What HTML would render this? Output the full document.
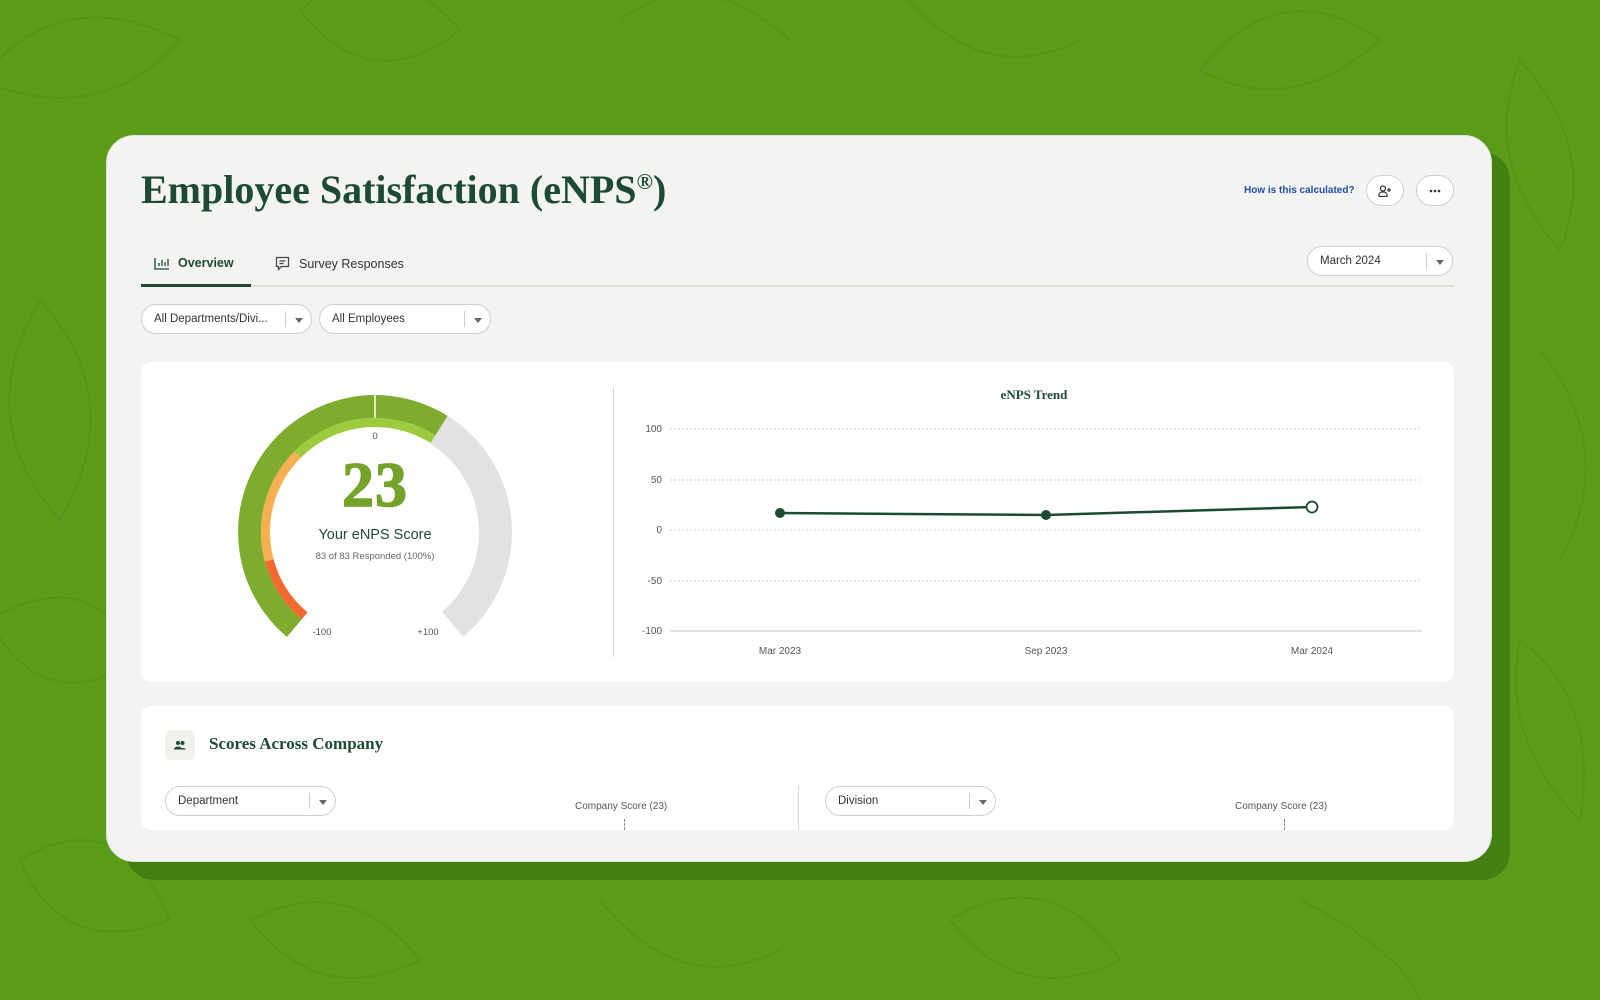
<!DOCTYPE html>
<html><head><meta charset="utf-8"><style>
*{margin:0;padding:0;box-sizing:border-box}
body{width:1600px;height:1000px;overflow:hidden;background:#5a9c19;font-family:"Liberation Sans",sans-serif;position:relative}
.abs{position:absolute}
.shadow{left:126px;top:152px;width:1384px;height:728px;background:#43800f;border-radius:28px}
.card{left:106px;top:135px;width:1386px;height:727px;background:#f3f3f1;border-radius:28px;overflow:hidden;border:1px solid #e2e2dc}
.title{left:34px;top:30px;font-family:"Liberation Serif",serif;font-weight:bold;font-size:40px;color:#1d4a33;letter-spacing:0}
.title sup{font-size:22px;vertical-align:14px}
.link{left:1137px;top:49px;font-size:10px;color:#1f4fa8;font-weight:bold}
.btn{width:38px;height:31px;border:1px solid #cfcfcb;border-radius:16px;background:#fff;display:flex;align-items:center;justify-content:center}
.tab{top:120px;font-size:12.5px;color:#333;display:flex;align-items:center;gap:9px}
.sel{height:30px;border:1px solid #cfcfcb;border-radius:15px;background:#fff;font-size:11.5px;color:#333;padding-left:12px;display:flex;align-items:center}
.sel .div{position:absolute;top:6px;bottom:6px;width:1px;background:#ccc}
.sel .arr{position:absolute;width:0;height:0;border-left:4px solid transparent;border-right:4px solid transparent;border-top:5px solid #666;top:13px}
.panel{background:#fff;border-radius:10px}
</style></head><body>
<svg class="abs" style="left:0;top:0" width="1600" height="1000" fill="none" stroke="rgba(30,70,0,0.10)" stroke-width="2">
<path d="M-20 80 Q60 -20 180 40 Q100 130 -20 80Z"/><path d="M40 300 Q-30 420 60 520 Q130 400 40 300Z"/><path d="M-10 620 Q90 560 140 660 Q40 720 -10 620Z"/><path d="M20 860 Q120 800 170 920 Q60 960 20 860Z"/>
<path d="M300 10 Q380 -60 460 30 Q370 100 300 10Z"/><path d="M620 20 Q700 -40 790 40"/><path d="M900 -10 Q980 90 1080 40"/><path d="M1200 70 Q1280 -30 1380 40 Q1290 120 1200 70Z"/>
<path d="M1520 60 Q1600 150 1560 250 Q1480 160 1520 60Z"/><path d="M1540 350 Q1620 450 1560 560"/><path d="M1520 640 Q1600 700 1580 820 Q1500 740 1520 640Z"/>
<path d="M250 920 Q350 870 420 960 Q320 1010 250 920Z"/><path d="M600 900 Q680 1000 780 950"/><path d="M950 920 Q1050 860 1120 960 Q1020 1010 950 920Z"/><path d="M1300 900 Q1400 950 1420 1000"/>
</svg>
<div class="abs shadow"></div>
<div class="abs card">
 <div class="abs title">Employee Satisfaction (eNPS<sup>®</sup>)</div>
 <div class="abs link">How is this calculated?</div>
 <div class="abs btn" style="left:1259px;top:39px"><svg width="14" height="12" viewBox="0 0 14 12" fill="none" stroke="#333" stroke-width="1.2"><circle cx="5" cy="3.5" r="2.5"/><path d="M1 11.5v-1.5a3 3 0 0 1 3-3h2a3 3 0 0 1 3 3v1.5z"/><path d="M11 3v4M9 5h4"/></svg></div>
 <div class="abs btn" style="left:1309px;top:39px"><svg width="12" height="4"><circle cx="2" cy="2" r="1.3" fill="#333"/><circle cx="6" cy="2" r="1.3" fill="#333"/><circle cx="10" cy="2" r="1.3" fill="#333"/></svg></div>
 <div class="abs tab" style="left:47px;color:#1d4a33;font-weight:bold"><svg width="15" height="13" fill="none" stroke="#1d4a33" stroke-width="1.3"><path d="M1 1v11h14"/><path d="M5 9V6M8 9V3M11 9V5M14 9V2"/></svg>Overview</div>
 <div class="abs tab" style="left:168px"><svg width="15" height="15" fill="none" stroke="#444" stroke-width="1.2"><path d="M1.5 1.5h12v9h-7l-3 3v-3h-2z"/><path d="M4.5 5h6M4.5 7.5h4"/></svg>Survey Responses</div>
 <div class="abs" style="left:34px;top:149px;width:1313px;height:2px;background:#dcdcd8"></div>
 <div class="abs" style="left:34px;top:148px;width:110px;height:3px;background:#1d4a33"></div>
 <div class="abs sel" style="left:1200px;top:110px;width:146px">March 2024<span class="div" style="left:118px"></span><span class="arr" style="left:128px"></span></div>
 <div class="abs sel" style="left:34px;top:168px;width:171px">All Departments/Divi...<span class="div" style="left:143px"></span><span class="arr" style="left:153px"></span></div>
 <div class="abs sel" style="left:212px;top:168px;width:172px">All Employees<span class="div" style="left:144px"></span><span class="arr" style="left:154px"></span></div>
 <div class="abs panel" style="left:34px;top:226px;width:1313px;height:320px"></div>
 <div class="abs" style="left:506px;top:251px;width:1px;height:270px;background:#d6d6d2"></div>
 <div class="abs panel" style="left:34px;top:570px;width:1313px;height:124px"></div>
 <div class="abs" style="left:58px;top:594px;width:30px;height:30px;border-radius:7px;background:#f0f0ec;display:flex;align-items:center;justify-content:center"><svg width="12" height="10"><circle cx="4" cy="3" r="2" fill="#1d4a33"/><circle cx="8.5" cy="3" r="2" fill="#1d4a33"/><path d="M0 9.5a4 3 0 0 1 8 0zM6 9.5a3.5 3 0 0 1 6 0z" fill="#1d4a33"/></svg></div>
 <div class="abs" style="left:102px;top:598px;font-family:'Liberation Serif',serif;font-size:17px;font-weight:bold;color:#1d4a33">Scores Across Company</div>
 <div class="abs sel" style="left:58px;top:650px;width:171px">Department<span class="div" style="left:143px"></span><span class="arr" style="left:153px"></span></div>
 <div class="abs sel" style="left:718px;top:650px;width:171px">Division<span class="div" style="left:143px"></span><span class="arr" style="left:153px"></span></div>
 <div class="abs" style="left:691px;top:650px;width:1px;height:44px;background:#d6d6d2"></div>
 <div class="abs" style="left:468px;top:665px;font-size:10px;color:#555">Company Score (23)</div>
 <div class="abs" style="left:1128px;top:665px;font-size:10px;color:#555">Company Score (23)</div>
 <div class="abs" style="left:517px;top:683px;width:0;height:11px;border-left:1px dashed #888"></div>
 <div class="abs" style="left:1177px;top:683px;width:0;height:11px;border-left:1px dashed #888"></div>
</div>
<svg class="abs" style="left:0;top:0" width="1600" height="1000">
 <g fill="none">
  <path d="M438.85 429.82 A120.5 120.5 0 0 1 452.46 624.30" stroke="#e2e2e0" stroke-width="33"/>
  <path d="M294.33 628.13 A125.5 125.5 0 0 1 441.5 425.58" stroke="#7dac2e" stroke-width="23"/>
  <path d="M304.61 615.88 A109.5 109.5 0 0 1 269.23 560.34" stroke="#f26a2f" stroke-width="9"/>
  <path d="M269.23 560.34 A109.5 109.5 0 0 1 297.57 454.57" stroke="#f6b052" stroke-width="9"/>
  <path d="M297.57 454.57 A109.5 109.5 0 0 1 433.02 439.14" stroke="#9ccc3d" stroke-width="9"/>
  <path d="M375 394v24" stroke="#fff" stroke-width="1.5"/>
 </g>
 <g font-family="Liberation Sans,sans-serif" text-anchor="middle">
  <text x="375" y="439" font-size="9.5" fill="#555">0</text>
  <text x="322" y="635" font-size="9.5" fill="#555">-100</text>
  <text x="428" y="635" font-size="9.5" fill="#555">+100</text>
  <text x="375" y="506" font-size="64" font-weight="bold" fill="#76a22a" font-family="Liberation Serif,serif" stroke="#76a22a" stroke-width="1.5" letter-spacing="1">23</text>
  <text x="375" y="539" font-size="14.5" fill="#1d4a33">Your eNPS Score</text>
  <text x="375" y="559" font-size="9.5" fill="#666">83 of 83 Responded (100%)</text>
  <text x="1034" y="399" font-size="13" font-weight="bold" fill="#1d4a33" font-family="Liberation Serif,serif">eNPS Trend</text>
 </g>
 <g stroke="#cfcfcf" stroke-width="1" stroke-dasharray="2 2">
  <path d="M670 429H1422M670 480H1422M670 530H1422M670 581H1422"/>
 </g>
 <path d="M670 631H1422" stroke="#d8d8d8" stroke-width="1.5"/>
 <g font-family="Liberation Sans,sans-serif" font-size="10" fill="#555" text-anchor="end">
  <text x="662" y="432">100</text><text x="662" y="483">50</text><text x="662" y="533">0</text><text x="662" y="584">-50</text><text x="662" y="634">-100</text>
 </g>
 <g font-family="Liberation Sans,sans-serif" font-size="10" fill="#555" text-anchor="middle">
  <text x="780" y="654">Mar 2023</text><text x="1046" y="654">Sep 2023</text><text x="1312" y="654">Mar 2024</text>
 </g>
 <path d="M780 513L1046 515L1312 507" stroke="#1d4a33" stroke-width="2.5" fill="none"/>
 <circle cx="780" cy="513" r="5" fill="#1d4a33"/>
 <circle cx="1046" cy="515" r="5" fill="#1d4a33"/>
 <circle cx="1312" cy="507" r="5.5" fill="#fff" stroke="#1d4a33" stroke-width="1.8"/>
</svg>
</body></html>
